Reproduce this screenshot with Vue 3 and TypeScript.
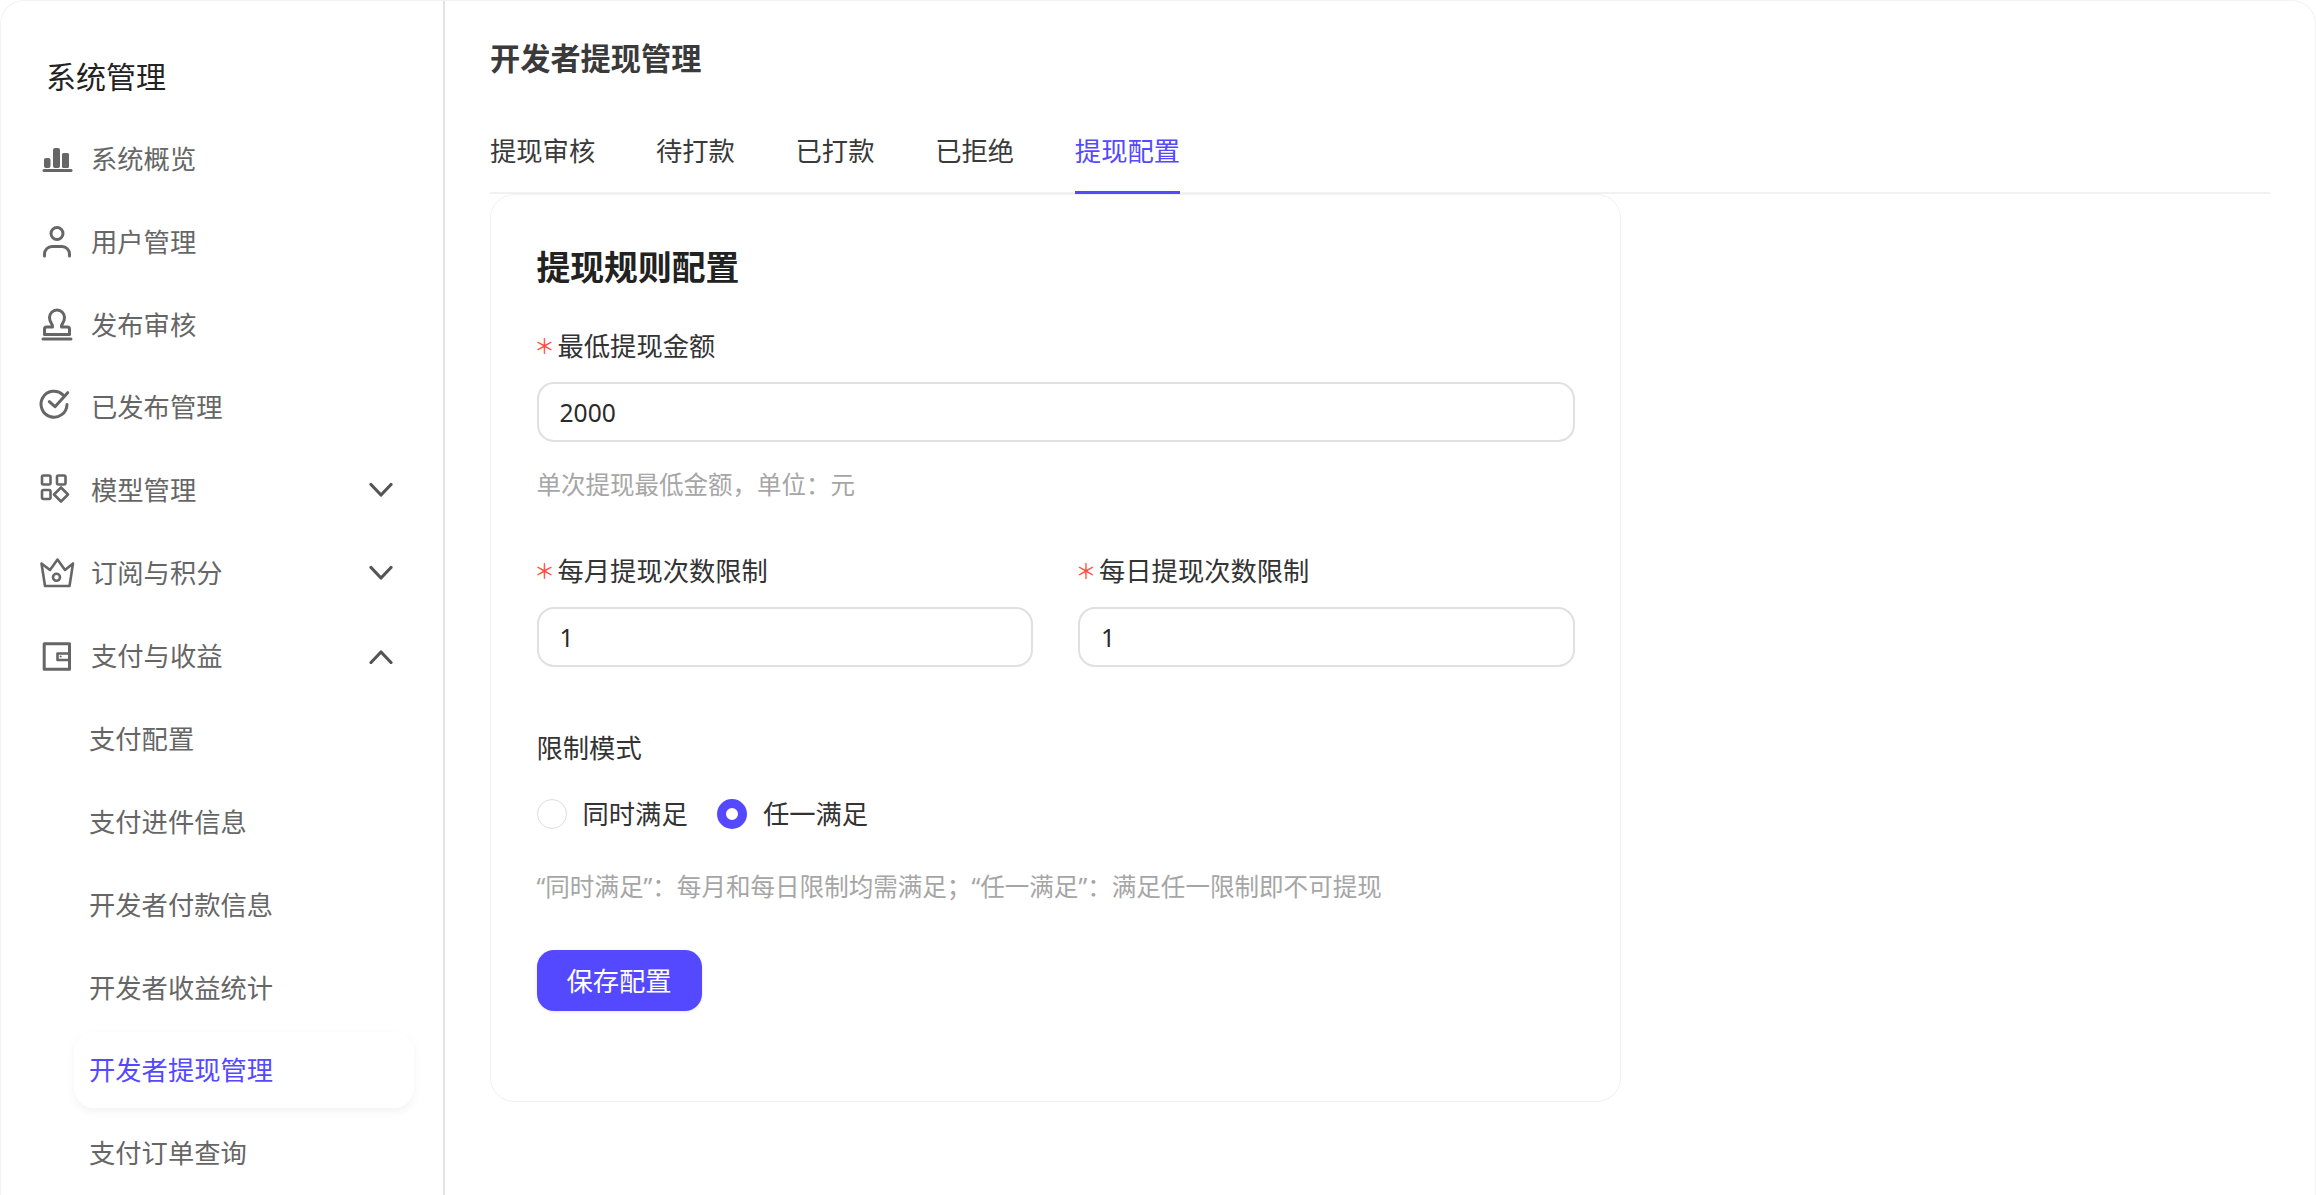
<script setup lang="ts">
interface NavItem {
  label: string
  icon?: string
  chevron?: 'up' | 'down'
  sub?: boolean
  active?: boolean
}

const nav: NavItem[] = [
  { label: '系统概览', icon: 'chart' },
  { label: '用户管理', icon: 'user' },
  { label: '发布审核', icon: 'stamp' },
  { label: '已发布管理', icon: 'check' },
  { label: '模型管理', icon: 'model', chevron: 'down' },
  { label: '订阅与积分', icon: 'crown', chevron: 'down' },
  { label: '支付与收益', icon: 'wallet', chevron: 'up' },
  { label: '支付配置', sub: true },
  { label: '支付进件信息', sub: true },
  { label: '开发者付款信息', sub: true },
  { label: '开发者收益统计', sub: true },
  { label: '开发者提现管理', sub: true, active: true },
  { label: '支付订单查询', sub: true },
]

const tabs = ['提现审核', '待打款', '已打款', '已拒绝', '提现配置']
const activeTab = '提现配置'
</script>

<template>
  <div class="shell">
    <aside class="sidebar">
      <div class="side-title">系统管理</div>
      <ul class="menu">
        <li
          v-for="item in nav"
          :key="item.label"
          class="row"
          :class="{ sub: item.sub, active: item.active }"
        >
          <svg v-if="item.icon" class="icon" viewBox="0 0 40 40" width="40" height="40">
            <g v-if="item.icon === 'chart'" transform="translate(0 1)">
              <rect class="solid" x="7" y="18" width="6.5" height="10" rx="2" />
              <rect class="solid" x="16" y="8" width="7" height="20" rx="2" />
              <rect class="solid" x="25" y="13" width="7" height="15" rx="1.5" />
              <path d="M7 30.5H34" />
            </g>
            <g v-else-if="item.icon === 'user'">
              <circle cx="20" cy="11.5" r="6" />
              <path d="M7.5 34v-2a7.5 7.5 0 0 1 7.5-7.5h10a7.5 7.5 0 0 1 7.5 7.5v2" />
            </g>
            <g v-else-if="item.icon === 'stamp'" transform="translate(0 -0.5)">
              <path d="M15.5 22.5v-1c0-2-3-3.500-3-8.500a7.500 7.500 0 0 1 15 0c0 5-3 6.500-3 8.500v1h6a2 2 0 0 1 2 2v5.500h-25v-5.500a2 2 0 0 1 2-2z" />
              <path d="M6 34.500H34" />
            </g>
            <g v-else-if="item.icon === 'check'">
              <path d="M26 7.800A13 13 0 1 0 30 17.500" />
              <path d="M12.300 14.700L18 19.700L30.700 5.700" />
            </g>
            <g v-else-if="item.icon === 'model'" class="thin">
              <rect x="5" y="5.500" width="8.500" height="9" rx="1.500" />
              <rect x="20" y="5.500" width="8.500" height="9" rx="1.500" />
              <rect x="5" y="20" width="8.500" height="9" rx="1.500" />
              <path d="M24 17.500l7 7-7 7-7-7z" />
            </g>
            <g v-else-if="item.icon === 'crown'" class="thin">
              <path d="M4.500 10.500L13 17L20.500 6.500L28 17L36 10.500L32.500 33H8Z" />
              <circle cx="19.500" cy="24.300" r="3.500" />
            </g>
            <g v-else-if="item.icon === 'wallet'" transform="translate(0 1.500)">
              <path d="M7.200 6.200H32.500V31.700H7.200Z" />
              <path class="thinline" d="M32 16H20.500V22.500H32" />
              <circle class="solid" cx="23.700" cy="18.900" r="1" />
            </g>
          </svg>
          <span class="row-label">{{ item.label }}</span>
          <svg v-if="item.chevron" class="chevron" viewBox="0 0 24 16" width="24" height="16">
            <path v-if="item.chevron === 'down'" d="M2 2.500L12 13L22 2.500" />
            <path v-else d="M2 14.500L12 4L22 14.500" />
          </svg>
        </li>
      </ul>
    </aside>

    <main class="main">
      <h1 class="page-title">开发者提现管理</h1>
      <nav class="tabs">
        <span v-for="t in tabs" :key="t" class="tab" :class="{ on: t === activeTab }">{{ t }}</span>
      </nav>

      <section class="card">
        <h2 class="card-title">提现规则配置</h2>

        <div class="field first">
          <label class="label"><i class="req">＊</i>最低提现金额</label>
          <input class="input" type="text" value="2000" readonly />
          <p class="hint">单次提现最低金额，单位：元</p>
        </div>

        <div class="pair">
          <div class="field">
            <label class="label"><i class="req">＊</i>每月提现次数限制</label>
            <input class="input" type="text" value="1" readonly />
          </div>
          <div class="field">
            <label class="label"><i class="req">＊</i>每日提现次数限制</label>
            <input class="input" type="text" value="1" readonly />
          </div>
        </div>

        <div class="mode">
          <div class="label">限制模式</div>
          <div class="radios">
            <span class="radio"><span class="dot"></span>同时满足</span>
            <span class="radio"><span class="dot checked"></span>任一满足</span>
          </div>
          <p class="hint hint-mode">“同时满足”：每月和每日限制均需满足；“任一满足”：满足任一限制即不可提现</p>
        </div>

        <button class="save" type="button">保存配置</button>
      </section>
    </main>
  </div>
</template>

<style>
html,
body {
  margin: 0;
  background: #fff;
}
</style>

<style scoped>
.shell {
  display: flex;
  width: 2316px;
  height: 1195px;
  box-sizing: border-box;
  overflow: hidden;
  background: #fff;
  border: 1px solid #f2f2f2;
  border-bottom: 0;
  border-radius: 24px 24px 0 0;
  font-family: "Noto Sans", "Noto Sans CJK SC", sans-serif;
  color: #333;
}

.sidebar {
  flex: 0 0 445px;
  width: 445px;
  box-sizing: border-box;
  margin-left: -1px;
  margin-top: -1px;
  border-right: 2px solid #e2e2e2;
  padding-top: 57px;
}

.side-title {
  height: 40px;
  margin-left: 46px;
  font-size: 30px;
  line-height: 40px;
  color: #222;
}

.menu {
  list-style: none;
  margin: 24px 0 0;
  padding: 0;
  display: flex;
  flex-direction: column;
  gap: 6.750px;
}

.row {
  display: flex;
  align-items: center;
  flex: 0 0 76px;
  height: 76px;
  padding-left: 37px;
  padding-right: 50px;
  font-size: 26.300px;
  color: #666;
}

.row-label {
  margin-left: 14px;
  line-height: 40px;
}

.row:not(.sub) + .row.sub {
  margin-top: 1px;
}

.row.sub {
  margin-left: 74px;
  margin-right: 29px;
  padding-left: 15px;
  padding-right: 0;
  border-radius: 20px;
}

.row.sub .row-label {
  margin-left: 0;
}

.row.active {
  color: #5449ff;
  background: #fff;
  box-shadow: 0 4px 10px rgba(0, 0, 0, 0.05);
}

.icon {
  flex: none;
}

.icon path,
.icon rect,
.icon circle {
  fill: none;
  stroke: #666;
  stroke-width: 3;
  stroke-linecap: round;
  stroke-linejoin: round;
}

.icon .solid {
  fill: #666;
  stroke: none;
}

.icon .thin path,
.icon .thin rect,
.icon .thin circle,
.icon .thinline {
  stroke-width: 2.600;
}

.chevron {
  flex: none;
  margin-left: auto;
}

.chevron path {
  fill: none;
  stroke: #555;
  stroke-width: 3.200;
  stroke-linecap: round;
  stroke-linejoin: round;
}

.main {
  flex: 1;
  min-width: 0;
  box-sizing: border-box;
  padding: 38px 45px 0 45px;
}

.page-title {
  margin: 0;
  height: 40px;
  font-size: 30.200px;
  line-height: 40px;
  font-weight: 700;
  color: #3a3a3a;
}

.tabs {
  display: flex;
  gap: 60.750px;
  height: 62px;
  margin-top: 53px;
  box-shadow: inset 0 -2px 0 #f1f1f1;
}

.tab {
  box-sizing: border-box;
  height: 62px;
  line-height: 38px;
  font-size: 26.300px;
  color: #3a3a3a;
}

.tab.on {
  color: #5449ff;
  border-bottom: 3px solid #5449ff;
}

.card {
  box-sizing: border-box;
  width: 1131px;
  height: 908px;
  padding: 49.500px 45.500px 0;
  border: 1.500px solid #f0f0f0;
  border-radius: 24px;
}

.card-title {
  margin: 0;
  font-size: 33.800px;
  line-height: 44px;
  font-weight: 700;
  color: #222;
}

.field.first {
  margin-top: 38px;
}

.field {
  min-width: 0;
}

.label {
  display: block;
  height: 40px;
  line-height: 40px;
  font-size: 26.300px;
  color: #333;
  white-space: nowrap;
}

.field .label {
  line-height: 38px;
}

.req {
  display: inline-block;
  width: 21px;
  text-indent: -2.500px;
  vertical-align: 1.500px;
  font-style: normal;
  font-size: 21px;
  color: #ff4d3f;
}

.input {
  display: block;
  box-sizing: border-box;
  width: 100%;
  height: 60px;
  margin-top: 15px;
  padding: 1px 21px 0;
  border: 2px solid #e0e0e0;
  border-radius: 17px;
  outline: none;
  background: #fff;
  font-family: inherit;
  font-size: 24.600px;
  color: #2a2a2a;
}

.hint {
  margin: 25px 0 0;
  font-size: 24.500px;
  line-height: 36px;
  color: #a6a6a6;
}

.pair {
  display: grid;
  grid-template-columns: 1fr 1fr;
  gap: 45px;
  margin-top: 49px;
}

.mode {
  margin-top: 61px;
}

.radios {
  display: flex;
  gap: 29.250px;
  height: 40px;
  margin-top: 26px;
}

.radio {
  display: inline-flex;
  align-items: center;
  gap: 16px;
  font-size: 26.300px;
  line-height: 40px;
  color: #333;
}

.dot {
  flex: none;
  box-sizing: border-box;
  width: 30px;
  height: 30px;
  border: 1.500px solid #dcdcdc;
  border-radius: 50%;
  background: #fff;
}

.dot.checked {
  border: 9px solid #5449ff;
}

.hint-mode {
  margin-top: 35px;
  font-size: 24.560px;
}

.save {
  display: block;
  box-sizing: border-box;
  width: 165px;
  height: 61px;
  margin-top: 45px;
  padding: 0 0 2px;
  border: 0;
  border-radius: 17px;
  background: #5449ff;
  box-shadow: 0 1px 3px rgba(84, 73, 255, 0.15);
  font-family: inherit;
  font-size: 26.300px;
  color: #fff;
}
</style>
